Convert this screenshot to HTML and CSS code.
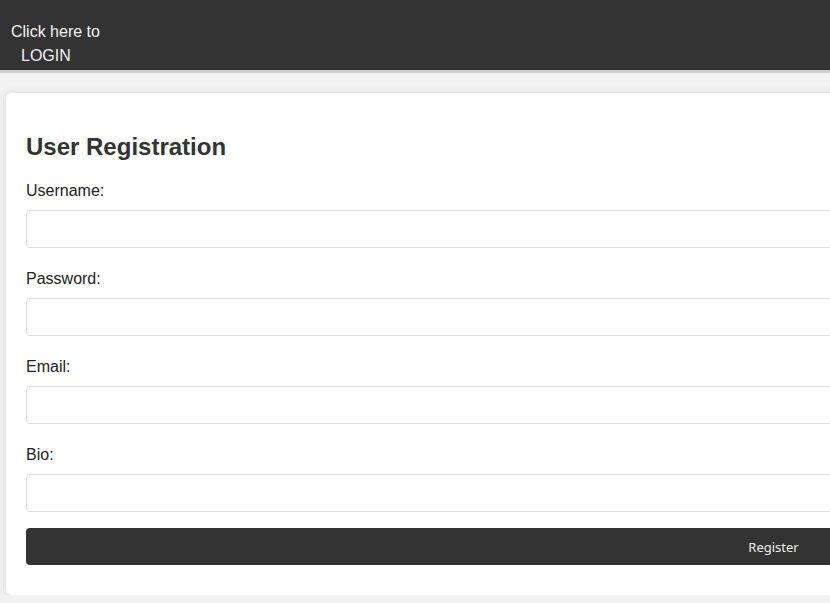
FILE: index.html
```html
<!DOCTYPE html>
<html lang="en">
<head>
<meta charset="utf-8">
<title>User Registration</title>
<link rel="stylesheet" href="styles.css">
</head>
<body>
<header class="topbar">
  <a class="login-link" href="#"><span class="line">Click here to</span><span class="line indent">LOGIN</span></a>
</header>
<main class="card">
  <h2 class="title">User Registration</h2>
  <form class="form">
    <label class="label" for="username">Username:</label>
    <input class="field" id="username" type="text">
    <label class="label" for="password">Password:</label>
    <input class="field" id="password" type="password">
    <label class="label" for="email">Email:</label>
    <input class="field" id="email" type="email">
    <label class="label" for="bio">Bio:</label>
    <input class="field" id="bio" type="text">
    <button class="submit" type="button">Register</button>
  </form>
</main>
</body>
</html>
```
FILE: styles.css
```css
html, body {
  margin: 0;
  padding: 0;
  overflow: hidden;
}
body {
  background: #f2f2f2;
  font-family: "Liberation Sans", Arial, sans-serif;
  color: #333;
}
.topbar {
  background: #333;
  height: 50px;
  padding-top: 20px;
  border-bottom: 3px solid #ccc;
}
.login-link {
  display: block;
  padding-left: 11px;
  color: #f2f2f2;
  text-decoration: none;
  font-size: 16px;
  line-height: 24px;
}
.line { display: block; }
.indent { padding-left: 10px; }
.card {
  margin: 20px 0 0 6px;
  width: 1495px;
  padding: 20px;
  background: #fff;
  border-radius: 5px;
  box-shadow: 0 0 10px rgba(0, 0, 0, 0.1);
}
.title {
  margin: 20px 0;
  font-size: 24px;
  line-height: 28px;
  font-weight: bold;
  color: #333;
}
.form {
  display: flex;
  flex-direction: column;
}
.label {
  font-size: 16px;
  line-height: 18.4px;
  padding-top: 1px;
  margin-bottom: 9.6px;
  color: #222;
}
.field {
  box-sizing: border-box;
  height: 38px;
  margin: 0 0 21px;
  padding: 10px;
  border: 1px solid #ddd;
  border-radius: 4px;
  font-size: 16px;
}
.field:last-of-type { margin-bottom: 16px; }
.submit {
  height: 37px;
  margin: 0 0 10px;
  border: none;
  border-radius: 4px;
  background: #333;
  color: #eee;
  font-family: "Noto Sans", sans-serif;
  font-size: 13px;
}
```
